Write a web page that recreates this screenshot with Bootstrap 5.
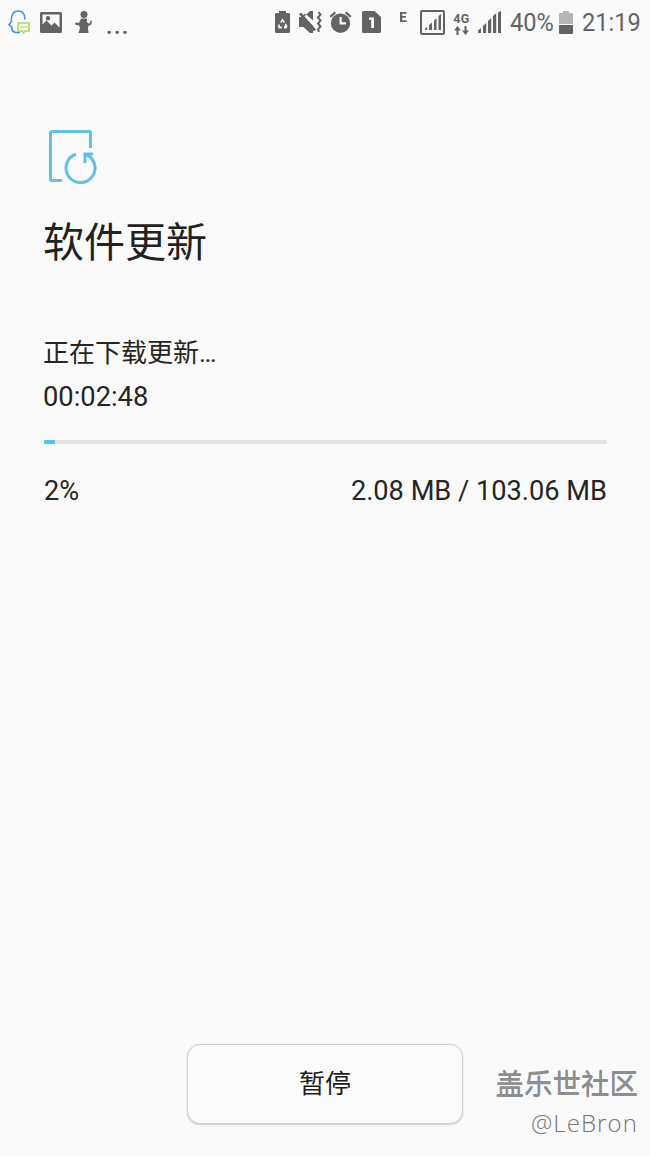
<!DOCTYPE html>
<html lang="zh">
<head>
<meta charset="utf-8">
<title>软件更新</title>
<link href="https://cdn.jsdelivr.net/npm/bootstrap@5.3.0/dist/css/bootstrap.min.css" rel="stylesheet">
<style>
html,body{height:100%}
body{background:#fafafa;color:#252525;font-family:Roboto,"Noto Sans CJK SC",sans-serif;overflow:hidden}
.screen{height:1156px;position:relative}
.statusbar{height:44px;padding:0 10px 0 8px;color:#636363}
.statusbar svg{display:block;fill:#636363;flex:none}
.stat-text{display:block;font-size:26.5px;line-height:44px;color:#636363;white-space:nowrap;transform:scaleX(.89);transform-origin:left center}
.stat-pct{width:43px;margin-left:9px}
.stat-clock{width:58px;margin-left:9px}
.dots{font-size:22px;font-weight:700;letter-spacing:1.500px;line-height:1;margin-top:10px;margin-left:13px}
.s-img{margin-left:10px}
.s-person{margin-left:13px}
.s-mute{margin-left:9px}
.s-alarm{margin-left:7px}
.s-sim{margin-left:10px}
.s-e{margin-left:19px;margin-bottom:11px}
.s-box{margin-left:13px}
.s-4g{margin-left:8px;width:17px;margin-top:3px}
.s-4g-label{font-size:12.500px;font-weight:700;line-height:12px;letter-spacing:.5px;color:#636363;white-space:nowrap}
.s-sig{margin-left:8px}
.s-bat{margin-left:6px}
.body-pane{padding:86px 43px 0 44px}
.update-ico{display:block;margin-left:5px;overflow:visible}
.page-title{font-size:41px;font-weight:400;line-height:56px;margin:31px 0 0 -1px;color:#222}
.dl-block{margin-top:60px;line-height:44px}
.dl-label{font-size:26px;margin-left:-1px}
.dl-time{font-size:27.3px;margin-left:-1px}
.track{height:4px;margin-top:21px;border-radius:1px;background:#e2e2e2}
.track .progress-bar{background:#5cc1e1}
.dl-meta{margin-top:25px;font-size:27.2px;line-height:44px}
.foot-btn{position:absolute;left:187px;top:1044px;width:276px;height:80px;background:#fbfbfb;border:1px solid #cfcfcf;border-radius:13px;box-shadow:0 1px 2px rgba(0,0,0,.18);font-size:26px;color:#1c1c1c}
.wm{position:absolute;right:12px;top:1067px;text-align:right}
.wm-a{font-size:28.500px;line-height:36px;color:#8e8e8e;text-shadow:0 1px 0 #8e8e8e}
.wm-b{font-size:24px;line-height:28px;letter-spacing:1.100px;color:#747474;font-family:"Open Sans",sans-serif;font-weight:300;margin-top:6px}
</style>
</head>
<body>
<div class="screen">
  <div class="statusbar d-flex align-items-center justify-content-between">
    <div class="d-flex align-items-center">
      <svg width="22" height="25" viewBox="0 0 22 25" style="fill:none">
        <path d="M7 22.500C4.500 21.500 3.800 19.500 4 17.500L1 14.500 3.500 11.500C2.800 5 5.500 1 10 1s7 3 7 8.500" stroke="#3b96e3" stroke-width="1.600" fill="none"/>
        <path d="M7 22.500h5" stroke="#3b96e3" stroke-width="1.600" fill="none"/>
        <path d="M10 13h11v8h-4l-1.500 2-1.500-2h-4z" stroke="#b5d36a" stroke-width="1.600" fill="#f4f8e4"/>
        <path d="M12.500 17h1.500M15 17h1.500M17.500 17h1.500" stroke="#b5d36a" stroke-width="1.500"/>
      </svg>
      <svg class="s-img" width="22" height="21" viewBox="0 0 22 21">
        <path fill-rule="evenodd" d="M1.500 0h19A1.500 1.500 0 0 1 22 1.500v18a1.500 1.500 0 0 1-1.500 1.500h-19A1.500 1.500 0 0 1 0 19.500v-18A1.500 1.500 0 0 1 1.500 0zM2.500 2.500v10l4-4 5 5 3-3 5 5v-13zM8 4a2.200 2.200 0 1 0 0 4.400A2.200 2.200 0 0 0 8 4z"/>
      </svg>
      <svg class="s-person" width="18" height="22" viewBox="0 0 18 22">
        <circle cx="9" cy="3.500" r="3.500"/>
        <path d="M6 7.500h5.500c1 1 .7 2.500.3 3.500l1.700 1.500c1.500 0 2-1 2-3l1.500.5c0 3-1.200 4.500-3.500 4.700l-.5 2 .5 5.300H3.500L5 17l-1-2.500L0 13.500l.5-2 3.500.5z"/>
      </svg>
      <span class="dots">...</span>
    </div>
    <div class="d-flex align-items-center">
      <svg width="15" height="22" viewBox="0 0 15 22">
        <path fill-rule="evenodd" d="M4 0h7v2h2.500A1.500 1.500 0 0 1 15 3.500v17A1.500 1.500 0 0 1 13.500 22h-12A1.500 1.500 0 0 1 0 20.500v-17A1.500 1.500 0 0 1 1.500 2H4zM7.500 7.500 5.200 11l1.400.9 1-1.600 1.100 1.700 1.400-.9zM4.300 12.500 2.700 15.500 4 17.500h2.800v-2H5zM11 12.500l-1.500.9.800 1.600H9v2.500h2.300l1.200-2.300z"/>
      </svg>
      <svg class="s-mute" width="23" height="22" viewBox="0 0 23 22">
        <path d="M0 6h4.500L11 0h3v9.500L6 2.500 4 4.500 14 15v7h-3l-6.500-6H0z"/>
        <path d="M2 1.500 17 18.500l-2 1.800L0 3.300z"/>
        <path d="M19.500 1l2 2.500-2.500 3 2.500 3-2.500 3 2.500 3-2.500 3 1 2.500" stroke="#636363" stroke-width="2" fill="none"/>
      </svg>
      <svg class="s-alarm" width="23" height="22" viewBox="0 0 23 22">
        <path fill-rule="evenodd" d="M11.500 2.500a9.700 9.700 0 1 1 0 19.400 9.700 9.700 0 0 1 0-19.400zM10.500 6v7.500h6.500v-2.200h-4.200V6z"/>
        <path d="M.5 5 5.500.5 7 2.200 2 6.700zM22.500 5l-5-4.500L16 2.200l5 4.500z"/>
      </svg>
      <svg class="s-sim" width="19" height="22" viewBox="0 0 19 22">
        <path fill-rule="evenodd" d="M1.500 0h11L19 6v14.500a1.500 1.500 0 0 1-1.500 1.500h-16A1.500 1.500 0 0 1 0 20.500v-19A1.500 1.500 0 0 1 1.500 0zM7 6.500v2.300h2.200V17H12V6.500z"/>
      </svg>
      <svg class="s-e" width="7" height="10" viewBox="0 0 7 10"><path d="M0 0h6.500v1.800H2.200V4h3.800v1.800H2.200v2.400h4.500V10H0z"/></svg>
      <svg class="s-box" width="25" height="25" viewBox="0 0 25 25">
        <path fill-rule="evenodd" d="M2 0h21a2 2 0 0 1 2 2v21a2 2 0 0 1-2 2H2a2 2 0 0 1-2-2V2a2 2 0 0 1 2-2zM2 2v21h21V2z"/>
        <path d="M5 20v-1.500L7 17v3zM9 20v-5l3-2.500V20zM14 20V10.500l2.500-2.500V20zM18.500 20V6L21 4v16z"/>
      </svg>
      <div class="s-4g d-flex flex-column align-items-center">
        <span class="s-4g-label">4G</span>
        <svg width="17" height="9" viewBox="0 0 17 9" style="margin-top:1px">
          <path d="M3.500 9V4.500H1L4.500 0 8 4.500H5.500V9zM11.500 0v4.500H9L12.500 9 16 4.500h-2.500V0z"/>
        </svg>
      </div>
      <svg class="s-sig" width="23" height="22" viewBox="0 0 23 22">
        <path d="M0 22v-2.500L3 17v5zM5 22v-7l3.200-3v10zM10 22V10l3.200-3v15zM15 22V5l3.200-3v20zM20 22V1.500L23 0v22z"/>
      </svg>
      <span class="stat-text stat-pct">40%</span>
      <svg class="s-bat" width="14" height="23" viewBox="0 0 14 23">
        <path d="M4 0h6v2h3a1 1 0 0 1 1 1v10H0V3a1 1 0 0 1 1-1h3z" style="fill:#b5b5b5"/>
        <path d="M0 14h14v8a1 1 0 0 1-1 1H1a1 1 0 0 1-1-1z"/>
      </svg>
      <span class="stat-text stat-clock">21:19</span>
    </div>
  </div>

  <div class="body-pane">
    <svg class="update-ico" width="48" height="54" viewBox="0 0 48 54" fill="none" stroke="#62c0e2" stroke-width="3">
      <path d="M13 50.500H3a1.500 1.500 0 0 1-1.500-1.500V3A1.500 1.500 0 0 1 3 1.500h37A1.500 1.500 0 0 1 41.500 3v15"/>
      <path d="M27 24.200A14.500 14.500 0 1 0 36 24.200"/>
      <path d="M44 24H36V33"/>
    </svg>
    <h1 class="page-title">软件更新</h1>
    <div class="dl-block">
      <div class="dl-label">正在下载更新…</div>
      <div class="dl-time">00:02:48</div>
    </div>
    <div class="progress track" role="progressbar" aria-valuenow="2" aria-valuemin="0" aria-valuemax="100">
      <div class="progress-bar" style="width:2%"></div>
    </div>
    <div class="dl-meta d-flex justify-content-between">
      <span>2%</span>
      <span>2.08 MB / 103.06 MB</span>
    </div>
  </div>

  <button type="button" class="btn foot-btn">暂停</button>
  <div class="wm">
    <div class="wm-a">盖乐世社区</div>
    <div class="wm-b">@LeBron</div>
  </div>
</div>
<script src="https://cdn.jsdelivr.net/npm/bootstrap@5.3.0/dist/js/bootstrap.bundle.min.js"></script>
</body>
</html>
